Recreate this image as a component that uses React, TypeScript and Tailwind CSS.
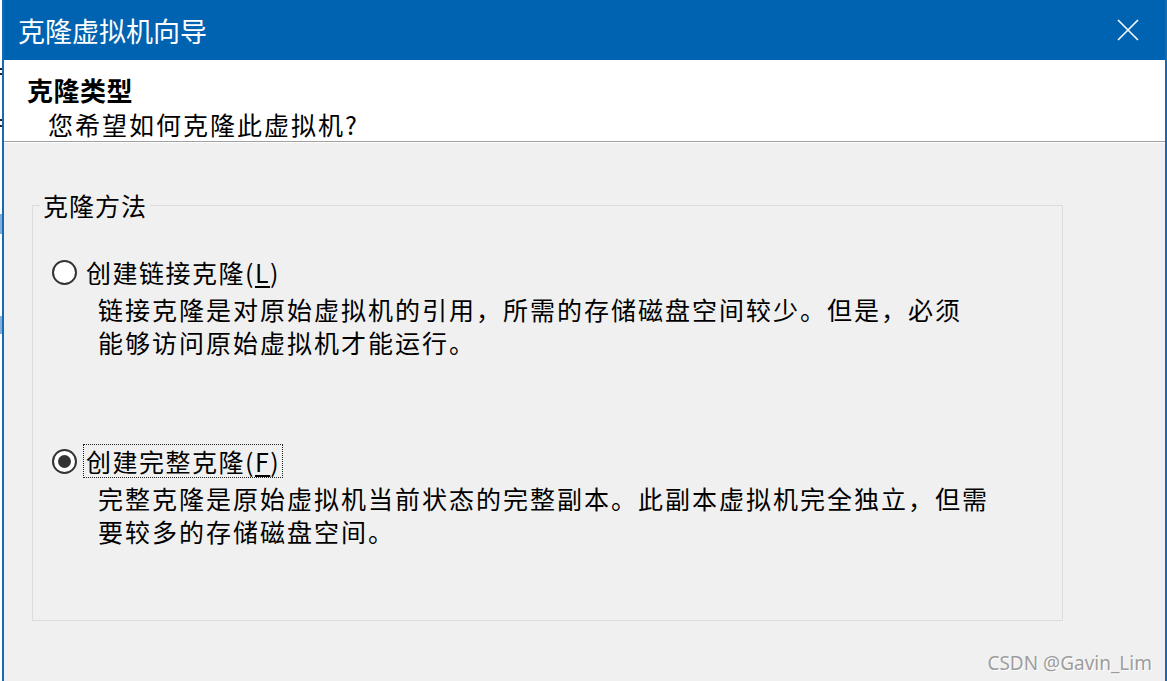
import React from "react";

function CloseIcon() {
    return (
        <svg width="22" height="22" viewBox="0 0 22 22" className="block">
            <path d="M1 1 L21 21 M21 1 L1 21" stroke="#ffffff" strokeWidth="1.6" fill="none" />
        </svg>
    );
}

function Radio({ checked }: { checked?: boolean }) {
    return (
        <div className="ml-[19px] flex h-[25px] w-[25px] shrink-0 items-center justify-center rounded-full border-[2.5px] border-[#333333] bg-white">
            {checked && <div className="h-[13px] w-[13px] rounded-full bg-[#333333]" />}
        </div>
    );
}

function Option({
    label,
    accessKey,
    lines,
    checked,
    focused,
}: {
    label: string;
    accessKey: string;
    lines: string[];
    checked?: boolean;
    focused?: boolean;
}) {
    return (
        <div>
            <div className="flex h-[34px] items-center">
                <Radio checked={checked} />
                <div
                    className={
                        focused
                            ? "ml-[6px] flex h-[34px] items-center border border-dotted border-[#222222] px-[2px]"
                            : "ml-[6px] flex h-[34px] items-center border border-transparent px-[2px]"
                    }
                >
                    <span className="text-[25px] leading-[30px] tracking-[1.5px]">
                        {label}(<span className="underline underline-offset-[3px]">{accessKey}</span>)
                    </span>
                </div>
            </div>
            <div className="mt-[4px] pl-[65px] text-[25px] leading-[33px] tracking-[2px]">
                {lines.map((line) => (
                    <div key={line}>{line}</div>
                ))}
            </div>
        </div>
    );
}

export default function App() {
    return (
        <div className="relative flex h-[681px] w-[1167px] overflow-hidden bg-white font-['Noto_Sans_CJK_SC','Noto_Sans',sans-serif] text-black">
            {/* window behind, peeking out on the left */}
            <div className="relative w-[2px] shrink-0 bg-white">
                <div className="absolute left-0 top-[68px] h-[2px] w-[2px] bg-[#222]" />
                <div className="absolute left-0 top-[73px] h-[2px] w-[2px] bg-[#222]" />
                <div className="absolute left-0 top-[119px] h-[2px] w-[2px] bg-[#222]" />
                <div className="absolute left-0 top-[125px] h-[2px] w-[2px] bg-[#222]" />
                <div className="absolute left-0 top-[214px] h-[20px] w-[2px] bg-[#7fb0dc]" />
                <div className="absolute left-0 top-[316px] h-[18px] w-[2px] bg-[#7fb0dc]" />
            </div>

            <div className="flex min-w-0 flex-1 flex-col border-x-2 border-[#1769b1]">
                {/* title bar */}
                <div className="flex h-[60px] shrink-0 items-center justify-between bg-[#0063b1] pl-[14px] pr-[26px]">
                    <span className="text-[27px] leading-none text-white">克隆虚拟机向导</span>
                    <CloseIcon />
                </div>

                {/* header */}
                <div className="h-[81px] shrink-0 bg-white">
                    <div className="mt-[13px] pl-[23px] text-[26px] font-bold leading-[34px] tracking-[0.5px]">克隆类型</div>
                    <div className="pl-[44px] text-[25px] leading-[34px] tracking-[2px]">您希望如何克隆此虚拟机?</div>
                </div>
                <div className="h-[1px] shrink-0 bg-[#a0a0a0]" />
                <div className="h-[1px] shrink-0 bg-white" />

                {/* body */}
                <div className="flex-1 bg-[#f0f0f0]">
                    <fieldset className="ml-[28px] mt-[49px] h-[429px] w-[1031px] border border-[#dcdcdc] p-0">
                        <legend className="ml-[7px] px-[3px] text-[25px] leading-[26px] tracking-[1px]">克隆方法</legend>
                        <div className="pt-[37px]">
                            <Option
                                label="创建链接克隆"
                                accessKey="L"
                                lines={["链接克隆是对原始虚拟机的引用，所需的存储磁盘空间较少。但是，必须", "能够访问原始虚拟机才能运行。"]}
                            />
                            <div className="mt-[85px]">
                                <Option
                                    label="创建完整克隆"
                                    accessKey="F"
                                    checked
                                    focused
                                    lines={["完整克隆是原始虚拟机当前状态的完整副本。此副本虚拟机完全独立，但需", "要较多的存储磁盘空间。"]}
                                />
                            </div>
                        </div>
                    </fieldset>
                </div>
            </div>

            {/* watermark */}
            <div className="absolute bottom-[8px] right-[15px] font-['Noto_Sans',sans-serif] text-[19px] leading-none text-[#9d9d9d] [text-shadow:1px_1px_0_#ffffff]">
                CSDN @Gavin_Lim
            </div>
        </div>
    );
}
